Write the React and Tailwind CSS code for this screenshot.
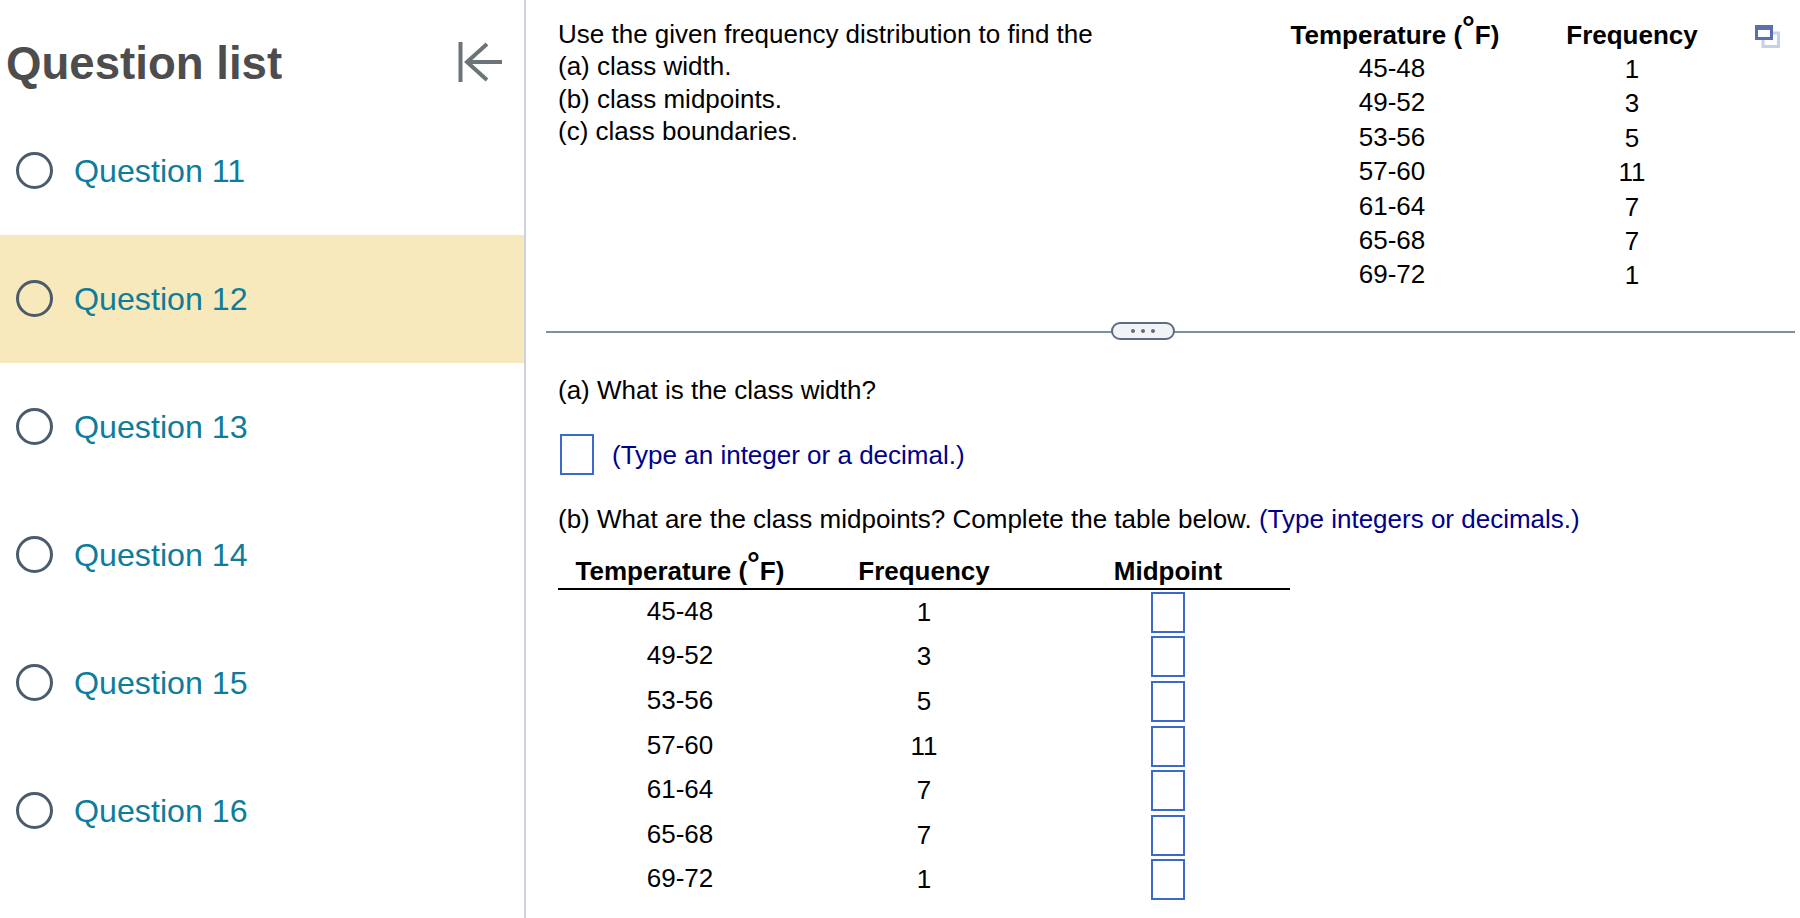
const questions = [11, 12, 13, 14, 15, 16];
const top = [["45-48", 1], ["49-52", 3], ["53-56", 5], ["57-60", 11], ["61-64", 7], ["65-68", 7], ["69-72", 1]];

function Box({ className }) {
  return <div className={"border-2 border-[#3a6bc9] bg-white " + className} />;
}

function Deg() {
  return <>Temperature (<span className="relative -top-[6px] text-[32px] leading-[0]">°</span>F)</>;
}

export default function App() {
  return (
    <div className="flex h-[918px] w-[1800px] overflow-hidden bg-white font-['Liberation_Sans',Arial,sans-serif] text-black">
      <aside className="flex w-[526px] shrink-0 flex-col border-r-2 border-[#cdd2e0]">
        <div className="flex h-[107px] items-center justify-between pl-[6px] pr-[22px] pt-[19px]">
          <h1 className="mt-[2px] text-[45.6px] font-bold leading-none text-[#4d4d4d]">Question list</h1>
          <svg width="44" height="42" viewBox="0 0 44 42" fill="none" stroke="#6b7578" strokeWidth="4" className="-mt-[2px]">
            <path d="M2.5 1V41" />
            <path d="M44 21H9" />
            <path d="M29 3L9 21L29 39" />
          </svg>
        </div>
        {questions.map((q) => (
          <div key={q} className={"flex h-[128px] items-center pl-[16px] " + (q === 12 ? "bg-[#f8e9bd]" : "")}>
            <span className="-mt-[2px] h-[37px] w-[37px] shrink-0 rounded-full border-[3.5px] border-[#4b5b6b]" />
            <span className="ml-[21px] text-[32.2px] text-[#0f7c99]">Question {q}</span>
          </div>
        ))}
      </aside>
      <main className="relative min-w-0 flex-1 text-[26px] leading-[33px]">
        <section className="flex h-[331px] pl-[32px]">
          <div className="w-[714px] shrink-0 pt-[18px] leading-[32.3px]">
            <p>Use the given frequency distribution to find the</p>
            <p>(a) class width.</p>
            <p>(b) class midpoints.</p>
            <p>(c) class boundaries.</p>
          </div>
          <div className="w-[480px] shrink-0 pt-[18px]">
            <div className="grid grid-cols-2 text-center font-bold leading-[34px]">
              <div className="pl-[6px]"><Deg /></div>
              <div>Frequency</div>
            </div>
            {top.map(([t, f]) => (
              <div key={t} className="grid h-[34.4px] grid-cols-2 text-center leading-[34px]">
                <div className="-mt-[1px]">{t}</div>
                <div>{f}</div>
              </div>
            ))}
          </div>
          <svg width="25" height="23" viewBox="0 0 25 23" className="absolute right-[20px] top-[25px]">
            <rect x="8" y="8" width="15.5" height="13.5" fill="#fff" stroke="#c8d0e8" strokeWidth="3" />
            <rect x="1.5" y="1.5" width="15" height="12" fill="#fff" stroke="#5a6fb0" strokeWidth="3" />
            <rect x="0" y="0" width="18" height="5" fill="#5a6fb0" />
          </svg>
        </section>
        <div className="relative ml-[20px] mr-[5px] h-[2px] bg-[#7f8ea0]">
          <div className="absolute -top-[9px] left-[565px] flex h-[18px] w-[64px] items-center justify-center gap-[6px] rounded-full border-2 border-[#5d6d80] bg-[#f1f3f6]">
            <span className="h-[4px] w-[4px] rounded-full bg-[#5d6d80]" />
            <span className="h-[4px] w-[4px] rounded-full bg-[#5d6d80]" />
            <span className="h-[4px] w-[4px] rounded-full bg-[#5d6d80]" />
          </div>
        </div>
        <section className="pl-[32px]">
          <p className="pt-[41px]">(a) What is the class width?</p>
          <div className="mt-[27px] flex items-center">
            <Box className="ml-[2px] h-[41px] w-[34px]" />
            <span className="ml-[18px] pt-[2px] text-[#00008b]">(Type an integer or a decimal.)</span>
          </div>
          <p className="mt-[28px]">
            (b) What are the class midpoints? Complete the table below. <span className="text-[#00008b]">(Type integers or decimals.)</span>
          </p>
          <div className="mt-[19px] w-[732px]">
            <div className="grid h-[35px] grid-cols-3 border-b-2 border-black text-center font-bold leading-[33px]">
              <div><Deg /></div>
              <div>Frequency</div>
              <div>Midpoint</div>
            </div>
            {top.map(([t, f]) => (
              <div key={t} className="grid h-[44.6px] grid-cols-3 items-center text-center">
                <div className="-mt-[2px]">{t}</div>
                <div>{f}</div>
                <div className="flex justify-center"><Box className="h-[41px] w-[34px]" /></div>
              </div>
            ))}
          </div>
        </section>
      </main>
    </div>
  );
}
